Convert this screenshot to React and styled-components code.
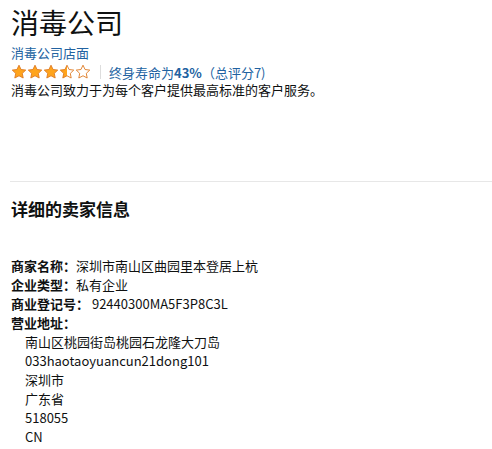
import styled, { createGlobalStyle } from 'styled-components';

const Global = createGlobalStyle`
  body {
    margin: 0;
    background: #fff;
    font-family: "Noto Sans CJK SC", "Liberation Sans", sans-serif;
    color: #0f1111;
  }
`;

const Page = styled.div`
  padding: 4px 0 0 11px;
`;

const Title = styled.h1`
  margin: 0;
  font-size: 28px;
  font-weight: 400;
  line-height: 36px;
  color: #0f1111;
`;

const StoreLink = styled.a`
  display: block;
  margin-top: 3px;
  font-size: 13px;
  line-height: 19px;
  color: #2162a1;
  text-decoration: none;
`;

const RatingRow = styled.div`
  display: flex;
  align-items: center;
  height: 16px;
  margin-top: 2px;
  font-size: 13px;
`;

const Stars = styled.div`
  display: flex;
`;

const Sep = styled.span`
  width: 1px;
  height: 14px;
  background: #ddd;
  margin: 0 8px 0 9px;
`;

const RatingText = styled.span`
  color: #2162a1;
  b { font-weight: 700; }
`;

const Desc = styled.p`
  margin: 0;
  font-size: 13px;
  line-height: 19px;
`;

const Divider = styled.hr`
  margin: 82px 0 0 -1px;
  border: 0;
  border-top: 1px solid #e7e7e7;
`;

const Heading = styled.h3`
  margin: 15px 0 0;
  font-size: 17px;
  font-weight: 700;
  line-height: 24px;
`;

const Info = styled.div`
  margin-top: 35px;
  font-size: 13px;
  line-height: 19px;
`;

const Row = styled.div``;

const Label = styled.span`
  font-weight: 700;
`;

const AddrLine = styled.div`
  padding-left: ${p => (p.$indent ? 14 : 0)}px;
`;

function Star({ fill }) {
  const id = `half-${Math.random().toString(36).slice(2)}`;
  const d = 'M8 1.2l2.05 4.3 4.7.6-3.45 3.25.88 4.65L8 11.75 3.82 14l.88-4.65L1.25 6.1l4.7-.6z';
  return (
    <svg width="16" height="16" viewBox="0 0 16 16">
      <defs>
        <linearGradient id={id}>
          <stop offset={fill} stopColor="#ffa41c" />
          <stop offset={fill} stopColor="#fff" />
        </linearGradient>
      </defs>
      <path d={d} fill={`url(#${id})`} stroke="#de7921" strokeWidth="0.9" strokeLinejoin="round" />
    </svg>
  );
}

export default function App() {
  const address = [
    '南山区桃园街岛桃园石龙隆大刀岛',
    '033haotaoyuancun21dong101',
    '深圳市',
    '广东省',
    '518055',
    'CN',
  ];
  return (
    <Page>
      <Global />
      <Title>消毒公司</Title>
      <StoreLink href="#">消毒公司店面</StoreLink>
      <RatingRow>
        <Stars>
          {[1, 1, 1, 0.5, 0].map((f, i) => (
            <Star key={i} fill={f} />
          ))}
        </Stars>
        <Sep />
        <RatingText>
          终身寿命为<b>43%</b>（总评分7)
        </RatingText>
      </RatingRow>
      <Desc>消毒公司致力于为每个客户提供最高标准的客户服务。</Desc>
      <Divider />
      <Heading>详细的卖家信息</Heading>
      <Info>
        <Row><Label>商家名称：</Label>深圳市南山区曲园里本登居上杭</Row>
        <Row><Label>企业类型：</Label>私有企业</Row>
        <Row><Label>商业登记号：</Label> 92440300MA5F3P8C3L</Row>
        <Row><Label>营业地址：</Label></Row>
        {address.map((a, i) => (
          <AddrLine key={i} $indent>{a}</AddrLine>
        ))}
      </Info>
    </Page>
  );
}
